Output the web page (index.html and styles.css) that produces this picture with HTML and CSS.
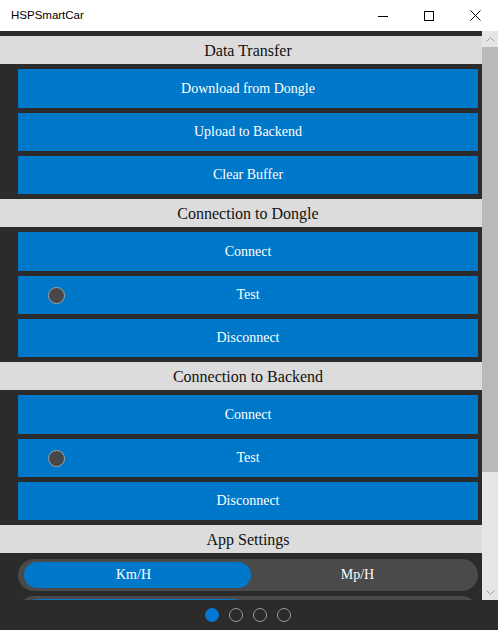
FILE: index.html
```html
<!DOCTYPE html>
<html>
<head>
<meta charset="utf-8">
<title>HSPSmartCar</title>
<link rel="stylesheet" href="styles.css">
</head>
<body>
<div class="window">
  <div class="titlebar">
    <span class="title">HSPSmartCar</span>
    <div class="controls">
      <div class="ctl"><svg width="10" height="10" viewBox="0 0 10 10"><path d="M0 5.5H10" stroke="#000" stroke-width="1"/></svg></div>
      <div class="ctl"><svg width="10" height="10" viewBox="0 0 10 10"><rect x="0.5" y="0.5" width="9" height="9" fill="none" stroke="#000" stroke-width="1"/></svg></div>
      <div class="ctl"><svg width="11" height="11" viewBox="0 0 11 11"><path d="M0.5 0.5L10.5 10.5M10.5 0.5L0.5 10.5" stroke="#000" stroke-width="1"/></svg></div>
    </div>
  </div>
  <div class="main">
    <div class="content">
      <div class="section-header">Data Transfer</div>
      <div class="section-body">
        <div class="btn first">Download from Dongle</div>
        <div class="btn">Upload to Backend</div>
        <div class="btn">Clear Buffer</div>
      </div>
      <div class="section-header">Connection to Dongle</div>
      <div class="section-body">
        <div class="btn first">Connect</div>
        <div class="btn"><span class="radio"></span>Test</div>
        <div class="btn">Disconnect</div>
      </div>
      <div class="section-header">Connection to Backend</div>
      <div class="section-body">
        <div class="btn first">Connect</div>
        <div class="btn"><span class="radio"></span>Test</div>
        <div class="btn">Disconnect</div>
      </div>
      <div class="section-header">App Settings</div>
      <div class="section-body settings">
        <div class="toggle">
          <div class="opt active">Km/H</div>
          <div class="opt">Mp/H</div>
        </div>
        <div class="toggle second">
          <div class="opt active"></div>
          <div class="opt"></div>
        </div>
      </div>
    </div>
    <div class="scrollbar">
      <div class="arrow"><svg width="9" height="5" viewBox="0 0 9 5"><path d="M0.5 4.5L4.5 0.7L8.5 4.5" fill="none" stroke="#a0a0a0" stroke-width="1"/></svg></div>
      <div class="thumb"></div>
      <div class="track"></div>
      <div class="arrow"><svg width="9" height="5" viewBox="0 0 9 5"><path d="M0.5 0.5L4.5 4.3L8.5 0.5" fill="none" stroke="#a0a0a0" stroke-width="1"/></svg></div>
    </div>
  </div>
  <div class="footer">
    <span class="dot on"></span>
    <span class="dot"></span>
    <span class="dot"></span>
    <span class="dot"></span>
  </div>
</div>
</body>
</html>
```

FILE: styles.css
```css
html, body {
  margin: 0;
  padding: 0;
}
body {
  width: 498px;
  height: 630px;
  overflow: hidden;
  background: #2b2b2b;
}
.window {
  display: flex;
  flex-direction: column;
  width: 498px;
  height: 630px;
}
.titlebar {
  height: 31px;
  flex: none;
  background: #ffffff;
  display: flex;
  align-items: center;
  justify-content: space-between;
}
.title {
  font-family: "Liberation Sans", Arial, sans-serif;
  font-size: 11.5px;
  color: #000;
  padding-left: 11px;
  padding-bottom: 1px;
}
.controls {
  display: flex;
  height: 31px;
}
.ctl {
  width: 46px;
  height: 31px;
  display: flex;
  align-items: center;
  justify-content: center;
}
.main {
  height: 569px;
  flex: none;
  display: flex;
}
.content {
  flex: 1;
  background: #2b2b2b;
  padding-top: 5px;
  overflow: hidden;
}
.section-header {
  height: 28px;
  box-sizing: border-box;
  padding: 1px 4px 0 18px;
  background: #dcdcdc;
  display: flex;
  align-items: center;
  justify-content: center;
  font-family: "Liberation Serif", "Times New Roman", serif;
  font-size: 16px;
  color: #111;
}
.section-body {
  display: flex;
  flex-direction: column;
  gap: 5px;
  padding: 5px 4px 5px 18px;
}
.btn {
  position: relative;
  height: 38px;
  background: #0078c9;
  color: #fff;
  display: flex;
  align-items: center;
  justify-content: center;
  font-family: "Liberation Serif", "Times New Roman", serif;
  font-size: 14px;
}
.btn.first {
  height: 39px;
}
.radio {
  position: absolute;
  left: 30px;
  top: 11px;
  width: 15px;
  height: 15px;
  border-radius: 50%;
  background: #474747;
  border: 1px solid #a5a5a5;
}
.settings {
  padding-top: 6px;
}
.toggle {
  height: 32px;
  flex: none;
  box-sizing: border-box;
  border-radius: 16px;
  background: #4a4a4a;
  padding: 3px 6px;
  display: grid;
  grid-template-columns: 227px 1fr;
}
.toggle.second {
  grid-template-columns: 223px 1fr;
}
.opt {
  display: flex;
  align-items: center;
  justify-content: center;
  border-radius: 13px;
  color: #fff;
  font-family: "Liberation Serif", "Times New Roman", serif;
  font-size: 14px;
  padding-right: 8px;
}
.opt.active {
  background: #0078c9;
}
.scrollbar {
  width: 16px;
  flex: none;
  background: #e6e6e6;
  display: flex;
  flex-direction: column;
}
.arrow {
  height: 16px;
  flex: none;
  display: flex;
  align-items: center;
  justify-content: center;
}
.thumb {
  height: 425px;
  flex: none;
  background: #b9b9b9;
}
.track {
  flex: 1;
}
.footer {
  height: 30px;
  flex: none;
  background: #2b2b2b;
  display: flex;
  align-items: center;
  justify-content: center;
  gap: 10px;
  padding-right: 2px;
}
.dot {
  width: 14px;
  height: 14px;
  box-sizing: border-box;
  border-radius: 50%;
  border: 1.5px solid #9a9a9a;
}
.dot.on {
  background: #0078d4;
  border-color: #0078d4;
}
```
